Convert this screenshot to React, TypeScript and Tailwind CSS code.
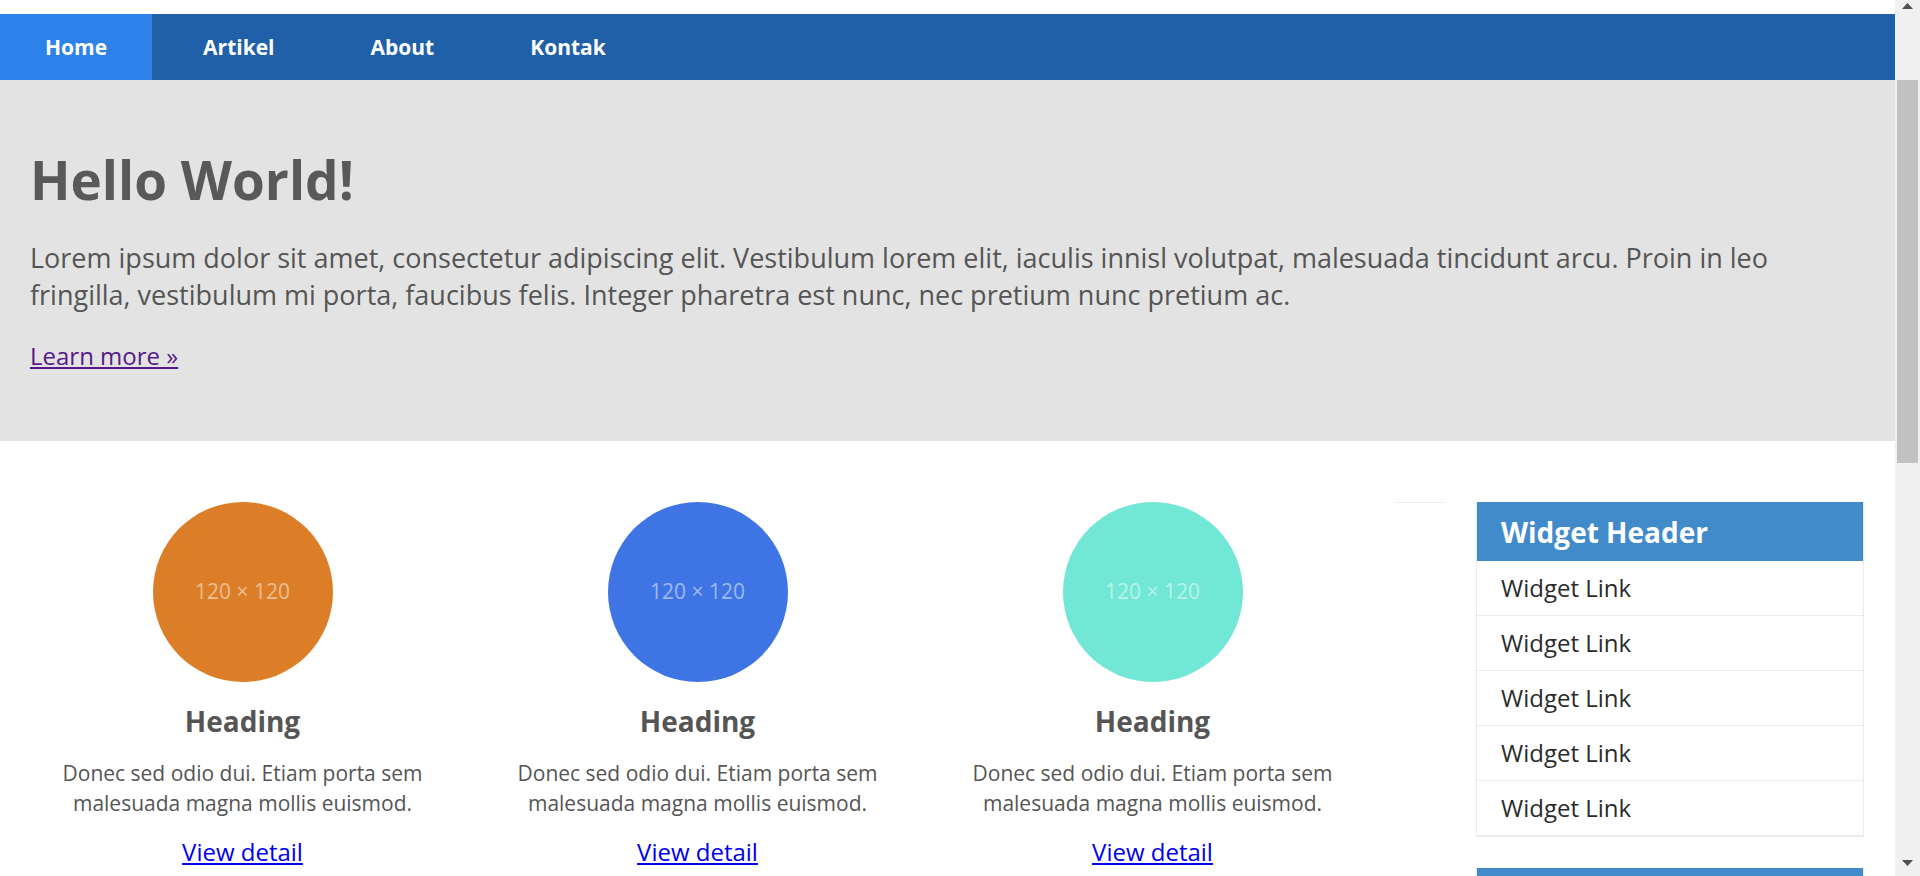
import React from "react";

const navItems = ["Home", "Artikel", "About", "Kontak"];

const cols = [
  { color: "bg-[#dc7e27]" },
  { color: "bg-[#3e74e4]" },
  { color: "bg-[#72e7d5]" },
];

function Widget() {
  return (
    <div className="w-[388px] border-x border-[#ebebeb]">
      <div className="flex h-[59px] items-center bg-[#428bca] px-[24px] text-[28px] font-bold text-white">
        Widget Header
      </div>
      {[0, 1, 2, 3, 4].map((i) => (
        <a
          key={i}
          href="#"
          className={
            i === 4
              ? "flex h-[56px] items-center border-b-2 border-[#ebebeb] px-[24px] text-[24px] text-[#2b2b2b]"
              : "flex h-[55px] items-center border-b border-[#ebebeb] px-[24px] text-[24px] text-[#2b2b2b]"
          }
        >
          Widget Link
        </a>
      ))}
    </div>
  );
}

function Scrollbar() {
  return (
    <div className="flex h-[876px] w-[25px] shrink-0 flex-col bg-[#f0f0f0]">
      <div className="flex h-[25px] justify-center pt-[3px]">
        <svg width="11" height="6" viewBox="0 0 11 6">
          <polygon points="5.5,0 11,6 0,6" fill="#505050" />
        </svg>
      </div>
      <div className="mx-[2px] mt-[55px] h-[383px] bg-[#c1c1c1]" />
      <div className="flex flex-1 items-end justify-center pb-[10px]">
        <svg width="11" height="6" viewBox="0 0 11 6">
          <polygon points="0,0 11,0 5.5,6" fill="#505050" />
        </svg>
      </div>
    </div>
  );
}

export default function App() {
  return (
    <div className="flex h-[876px] w-[1920px] overflow-hidden bg-white font-['Open_Sans',sans-serif]">
      <div className="w-[1895px] shrink-0">
        <div className="h-[14px] bg-white" />

        <nav className="flex h-[66px] gap-[6px] bg-[#2060a9] pt-[2px]">
          {navItems.map((item, i) => (
            <a
              key={item}
              href="#"
              className={
                i === 0
                  ? "-mt-[2px] flex h-[66px] items-center bg-[#2c82e8] px-[45px] pt-[2px] text-[21px] font-bold text-white"
                  : "flex items-center px-[45px] text-[21px] font-bold text-white"
              }
            >
              {item}
            </a>
          ))}
        </nav>

        <section className="bg-[#e3e3e3] px-[30px] pb-[67px] pt-[70px]">
          <h1 className="mb-[29px] text-[53px] font-bold leading-[60px] text-[#595959]">Hello World!</h1>
          <p className="mb-[24px] max-w-[1790px] text-[27px] leading-[37px] text-[#555555]">
            Lorem ipsum dolor sit amet, consectetur adipiscing elit. Vestibulum lorem elit, iaculis innisl volutpat,
            malesuada tincidunt arcu. Proin in leo fringilla, vestibulum mi porta, faucibus felis. Integer pharetra est
            nunc, nec pretium nunc pretium ac.
          </p>
          <p className="text-[24px] leading-[37px]">
            <a href="#" className="text-[#551a8b] underline">
              Learn more »
            </a>
          </p>
        </section>

        <div className="flex items-start pl-[15px] pt-[61px]">
          <div className="grid w-[1365px] grid-cols-3">
            {cols.map((c, i) => (
              <div key={i} className="flex flex-col items-center px-[15px] text-center">
                <div
                  className={`flex h-[180px] w-[180px] items-center justify-center rounded-full text-[21px] text-white/50 ${c.color}`}
                >
                  120 × 120
                </div>
                <h2 className="mt-[23px] text-[28px] font-bold leading-[32px] text-[#555555]">Heading</h2>
                <p className="mt-[21px] text-[21px] leading-[30px] text-[#555555]">
                  Donec sed odio dui. Etiam porta sem malesuada magna mollis euismod.
                </p>
                <a href="#" className="mt-[17px] text-[24px] leading-[34px] text-[#0000ee] underline">
                  View detail
                </a>
              </div>
            ))}
          </div>
          <div className="ml-[15px] w-[50px] border-t border-[#efefef]" />
          <div className="ml-[31px] flex flex-col gap-[31px]">
            <Widget />
            <Widget />
          </div>
        </div>
      </div>
      <Scrollbar />
    </div>
  );
}
